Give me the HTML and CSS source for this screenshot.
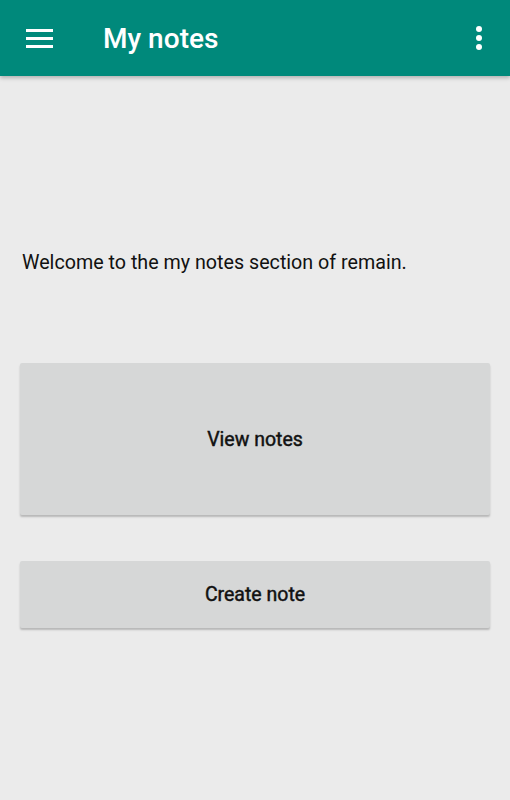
FILE: index.html
```html
<!DOCTYPE html>
<html>
<head>
  <title>My notes</title>
  <link rel="stylesheet" href="styles.css">
</head>
<body>
  <div class="toolbar">
    <div class="menu-btn">
      <span></span><span></span><span></span>
    </div>
    <h1 class="title">My notes</h1>
    <div class="more-btn">
      <span></span><span></span><span></span>
    </div>
  </div>

  <div class="content">
    <p class="welcome">Welcome to the my notes section of remain.</p>
    <button class="card-btn tall">View notes</button>
    <button class="card-btn">Create note</button>
  </div>
</body>
</html>
```

FILE: styles.css
```css
body {
  margin: 0;
  background-color: #ebebeb;
  font-family: Roboto, "Noto Sans", sans-serif;
}

.toolbar {
  height: 76px;
  background-color: #00897b;
  display: flex;
  align-items: center;
  box-shadow: 0 2px 4px rgba(0, 0, 0, 0.25);
  position: relative;
}

.menu-btn {
  width: 27px;
  margin-left: 26px;
  display: flex;
  flex-direction: column;
  gap: 5px;
}

.menu-btn span {
  display: block;
  height: 3px;
  background-color: white;
}

.title {
  margin: 0 0 0 50px;
  color: white;
  font-family: "Roboto Medium", Roboto, sans-serif;
  font-size: 28px;
  font-weight: 500;
  flex: 1;
}

.more-btn {
  width: 6px;
  margin-right: 28px;
  display: flex;
  flex-direction: column;
  gap: 3px;
}

.more-btn span {
  display: block;
  width: 6px;
  height: 6px;
  border-radius: 50%;
  background-color: white;
}

.content {
  padding: 0 20px 40px;
  display: flex;
  flex-direction: column;
}

.welcome {
  margin: 175px 0 0 2px;
  font-size: 19.7px;
  line-height: 24px;
  color: #111;
}

.card-btn {
  margin-top: 46px;
  height: 67px;
  border: none;
  border-radius: 2px;
  background-color: #d6d7d7;
  box-shadow: 0 2px 2px rgba(0, 0, 0, 0.22);
  font-family: Roboto, sans-serif;
  font-size: 19.5px;
  font-weight: 400;
  -webkit-text-stroke: 0.45px #111;
  color: #111;
}

.card-btn.tall {
  margin-top: 88px;
  height: 152px;
}
```
